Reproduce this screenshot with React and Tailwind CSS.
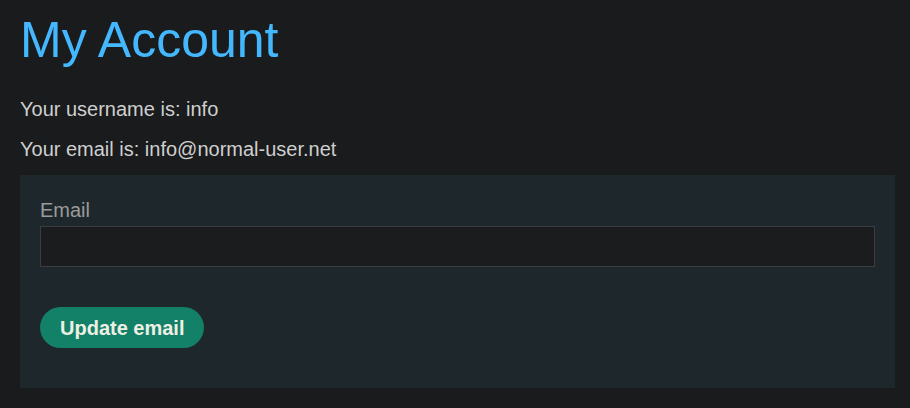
export default function App() {
  return (
    <div className="min-h-[408px] w-full bg-[#1a1b1d] pl-5 pr-[15px] pt-3 font-['Liberation_Sans',Arial,sans-serif]">
      <h1 className="text-[50px] leading-[56px] font-normal text-[#44b8ff]">My Account</h1>
      <p className="mt-[29px] text-[20px] leading-[24px] text-[#cfcfcf]">Your username is: info</p>
      <p className="mt-4 text-[20px] leading-[24px] text-[#cfcfcf]">Your email is: info@normal-user.net</p>
      <form className="mt-[14px] flex h-[213px] flex-col bg-[#1e282c] px-5 pt-[23px]">
        <label className="text-[20px] leading-[24px] text-[#9b9b9b]">Email</label>
        <input
          type="email"
          className="mt-[4px] h-[41px] w-full border border-[#3a3e40] bg-[#1b1c1d] px-2 text-[#cfcfcf] outline-none"
        />
        <div className="mt-10">
          <button
            type="button"
            className="h-[41px] rounded-full bg-[#138068] px-5 text-[20px] font-bold text-[#eef0e4]"
          >
            Update email
          </button>
        </div>
      </form>
    </div>
  );
}
